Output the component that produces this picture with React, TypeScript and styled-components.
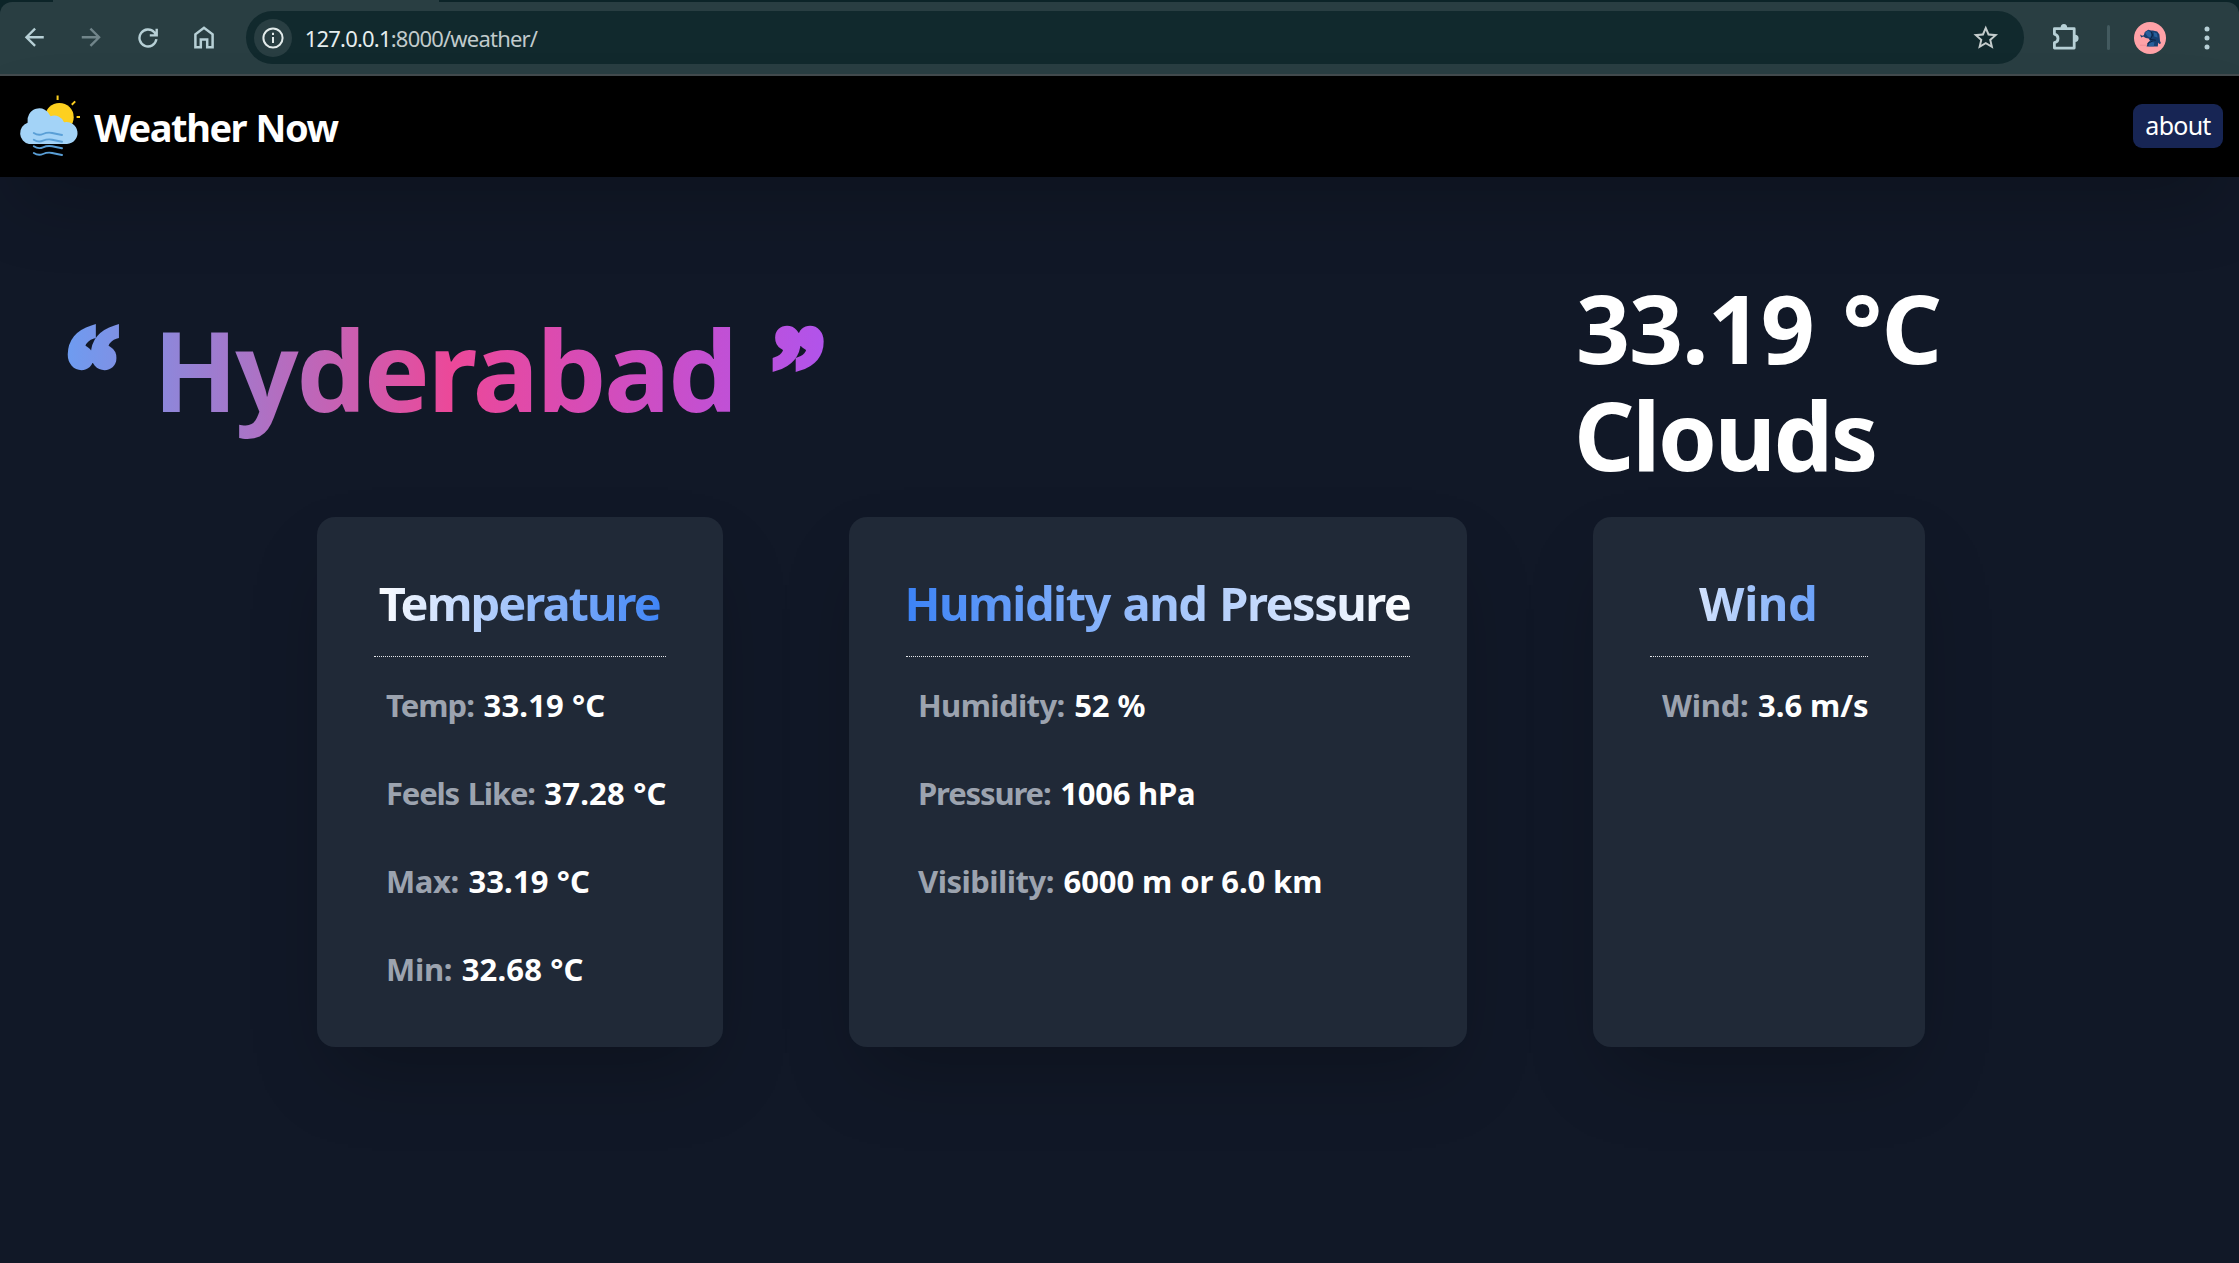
import React from "react";
import styled, { createGlobalStyle } from "styled-components";

const GlobalStyle = createGlobalStyle`
  * { box-sizing: border-box; }
  html, body { margin: 0; padding: 0; background: #111827; }
  body {
    font-family: "Noto Sans", "Open Sans", sans-serif;
    color: #fff;
    overflow: hidden;
  }
  h1, h2, p { margin: 0; }
`;

const Window = styled.div`
  width: 2239px;
  height: 1263px;
  display: flex;
  flex-direction: column;
  background: #111827;
`;

/* Browser chrome */

const BrowserFrame = styled.div`
  flex: none;
  background: #0c2428;
`;

const TabStrip = styled.div`
  height: 2px;
  padding-left: 53px;
`;

const ActiveTab = styled.div`
  width: 386px;
  height: 2px;
  background: #293e42;
`;

const Toolbar = styled.div`
  height: 74px;
  display: flex;
  align-items: center;
  padding: 0 0 1px 6px;
  background: #293e42;
  border-bottom: 2px solid #434b4e;
  border-radius: 12px 12px 0 0;
`;

const ToolButton = styled.span<{ $dim?: boolean; $width?: number }>`
  flex: none;
  width: ${(p) => p.$width ?? 56.7}px;
  display: flex;
  justify-content: center;
  color: ${(p) => (p.$dim ? "#71858a" : "#b7d0d6")};

  svg { display: block; }
`;

const AddressBar = styled.div`
  flex: none;
  width: 1778px;
  height: 53px;
  margin-left: 13px;
  padding: 0 23px 0 8px;
  display: flex;
  align-items: center;
  border-radius: 27px;
  background: #11292d;
`;

const SiteInfo = styled.span`
  width: 38px;
  height: 38px;
  display: flex;
  align-items: center;
  justify-content: center;
  border-radius: 50%;
  background: #293e42;
`;

const Url = styled.span`
  flex: 1;
  margin-left: 13px;
  font-size: 22px;
  line-height: 30px;
  letter-spacing: -0.8px;
  color: #c1cbcc;
`;

const Host = styled.span`
  color: #e6eeee;
`;

const Divider = styled.span`
  flex: none;
  width: 3px;
  height: 25px;
  margin: 0 24.5px 0 0;
  border-radius: 2px;
  background: #435a5f;
`;

const Avatar = styled.span`
  flex: none;
  width: 32px;
  height: 32px;
  border-radius: 50%;
  overflow: hidden;
  background: #ffa1a7;

  svg { display: block; }
`;

/* Site header */

const NavBar = styled.header`
  flex: none;
  height: 101px;
  display: flex;
  align-items: center;
  justify-content: space-between;
  padding: 0 16px 1px 14px;
  background: #000;
  box-shadow: 0 37px 75px -18px rgba(0, 0, 0, 0.25);
`;

const Brand = styled.div`
  display: flex;
  align-items: center;
  gap: 14px;
`;

const BrandName = styled.span`
  padding-top: 2px;
  font-size: 38px;
  font-weight: 700;
  line-height: 50px;
  letter-spacing: -1.45px;
  word-spacing: 1px;
`;

const AboutLink = styled.a`
  width: 90px;
  height: 44px;
  border-radius: 9px;
  background: #172554;
  font-size: 25px;
  line-height: 43px;
  letter-spacing: -0.74px;
  text-align: center;
`;

/* Hero */

const Hero = styled.section`
  flex: none;
  height: 340px;
  display: flex;
  align-items: flex-start;
  padding: 97px 0 0 24px;
`;

const City = styled.h1`
  width: 1552px;
  display: flex;
  align-items: flex-start;
  padding: 35px 0 0 42.6px;
  font-size: 111px;
  line-height: 120px;
`;

/* $offset is how far the part starts from the left end of the shared sweep */
const Swept = styled.span<{ $offset: number }>`
  background-image: linear-gradient(
    to right,
    #60a5fa ${(p) => -p.$offset}px,
    #ec4899 ${(p) => 428 - p.$offset}px,
    #a855f7 ${(p) => 856 - p.$offset}px
  );
  -webkit-background-clip: text;
  background-clip: text;
  color: transparent;
`;

const CityName = styled(Swept)`
  width: 590px;
  height: 150px;
  margin-left: 28.4px;
  letter-spacing: -2.53px;
`;

const Quote = styled(Swept)`
  width: 58px;
  margin-top: 6px;
  font-family: "Liberation Serif", serif;
  font-size: 102px;
  font-weight: 700;
  line-height: 110px;
  -webkit-text-stroke: 7px transparent;
  transform: scale(1.03, 1.18);
`;

const ClosingQuote = styled(Quote)`
  margin-left: 30px;
`;

const Summary = styled.div`
  font-size: 94.5px;
  font-weight: 700;
  line-height: 107px;
`;

const SummaryLine = styled.p<{ $tracking: number; $shift?: number }>`
  margin-left: ${(p) => p.$shift ?? 0}px;
  letter-spacing: ${(p) => p.$tracking}px;
  word-spacing: 5px;
  white-space: nowrap;
`;

/* Cards */

const Cards = styled.section`
  display: flex;
  gap: 126px;
  padding-left: 317px;
`;

const CardBox = styled.article<{ $width: number }>`
  width: ${(p) => p.$width}px;
  height: 530px;
  padding: 58px 57px 0 56.5px;
  border-radius: 18px;
  background: #202937;
  box-shadow: 0 37px 75px -18px rgba(0, 0, 0, 0.25);
`;

const CardTitle = styled.h2<{ $reverse?: boolean; $tracking: number }>`
  height: 67px;
  margin-left: -1px;
  font-size: 47px;
  line-height: 56px;
  text-align: center;
  white-space: nowrap;
  letter-spacing: ${(p) => p.$tracking}px;
  word-spacing: 2px;
  background-image: linear-gradient(
    to ${(p) => (p.$reverse ? "left" : "right")},
    #ffffff,
    #3b82f6
  );
  -webkit-background-clip: text;
  background-clip: text;
  color: transparent;
`;

const Rule = styled.div`
  height: 1px;
  margin: 14px 0 3.5px;
  border-top: 1px dotted #e5e7eb;
`;

const Row = styled.p`
  display: flex;
  gap: 9.6px;
  padding-left: 12.5px;
  font-size: 31px;
  font-weight: 700;
  line-height: 88px;
  white-space: nowrap;
`;

const Label = styled.span<{ $tracking: number }>`
  color: #9ca3af;
  letter-spacing: ${(p) => p.$tracking}px;
  word-spacing: 2px;
`;

const Value = styled.span<{ $tracking: number }>`
  letter-spacing: ${(p) => p.$tracking}px;
`;

type Reading = { label: string; lt: number; value: string; vt: number };
type Panel = { title: string; tracking: number; width: number; reverse?: boolean; rows: Reading[] };

const panels: Panel[] = [
  {
    title: "Temperature",
    tracking: -1.97,
    width: 406,
    rows: [
      { label: "Temp:", lt: -0.95, value: "33.19 °C", vt: 0.12 },
      { label: "Feels Like:", lt: -1.2, value: "37.28 °C", vt: 0.2 },
      { label: "Max:", lt: -0.41, value: "33.19 °C", vt: 0.12 },
      { label: "Min:", lt: -0.3, value: "32.68 °C", vt: 0.12 },
    ],
  },
  {
    title: "Humidity and Pressure",
    tracking: -1.5,
    width: 618,
    reverse: true,
    rows: [
      { label: "Humidity:", lt: -0.61, value: "52 %", vt: -0.1 },
      { label: "Pressure:", lt: -1.13, value: "1006 hPa", vt: -0.22 },
      { label: "Visibility:", lt: -0.5, value: "6000 m or 6.0 km", vt: -0.09 },
    ],
  },
  {
    title: "Wind",
    tracking: -0.35,
    width: 332,
    rows: [{ label: "Wind:", lt: -0.25, value: "3.6 m/s", vt: -0.05 }],
  },
];

const BackIcon = () => (
  <svg width="28.5" height="28.5" viewBox="0 0 24 24" fill="currentColor">
    <path d="M20 11H7.83l5.59-5.59L12 4l-8 8 8 8 1.41-1.41L7.83 13H20v-2z" />
  </svg>
);

const ForwardIcon = () => (
  <svg width="28.5" height="28.5" viewBox="0 0 24 24" fill="currentColor">
    <path d="M12 4l-1.41 1.41L16.17 11H4v2h12.17l-5.58 5.59L12 20l8-8z" />
  </svg>
);

const ReloadIcon = () => (
  <svg width="20" height="20" viewBox="0 0 20 20" fill="none" stroke="currentColor" strokeWidth="2.4">
    <path d="M18.4 11.2A8.5 8.5 0 1 1 16.3 4.3L18.2 6.8M18.7 .8V7.4H11.8" />
  </svg>
);

const HomeIcon = () => (
  <svg width="20" height="23" viewBox="0 0 20 23" fill="none" stroke="currentColor" strokeWidth="2.5">
    <path d="M1.4 21.2V8.3L10 1.8l8.6 6.5v12.9h-5.4v-7.7H6.8v7.7z" />
  </svg>
);

const InfoIcon = () => (
  <svg width="22" height="22" viewBox="0 0 22 22" fill="none" stroke="#e3ebeb" strokeWidth="2">
    <circle cx="11" cy="11" r="9.6" />
    <path d="M11 10v6M11 5.8v2.3" />
  </svg>
);

const StarIcon = () => (
  <svg width="29.5" height="29.5" viewBox="0 0 24 24" fill="#c4cccc">
    <path d="M22 9.24l-7.19-.62L12 2 9.19 8.63 2 9.24l5.46 4.73L5.82 21 12 17.27 18.18 21l-1.63-7.03L22 9.24zM12 15.4l-3.76 2.27 1-4.28-3.32-2.88 4.38-.38L12 6.1l1.71 4.04 4.38.38-3.32 2.88 1 4.28L12 15.4z" />
  </svg>
);

const ExtensionIcon = () => (
  <svg width="27" height="29" viewBox="0 -.5 27 29">
    <path
      d="M2.4 5.2H22.2V24.6H2.4V19.2C7.2 18 7.2 11.8 2.4 10.6Z"
      fill="none" stroke="currentColor" strokeWidth="2.8" strokeLinejoin="round"
    />
    <path d="M8.6 4.4a3.3 3.8 0 0 1 6.6 0zM23 11.2a3.6 3.6 0 0 1 0 7.2z" fill="currentColor" />
  </svg>
);

const MenuIcon = () => (
  <svg width="6" height="24" viewBox="0 0 6 24" fill="currentColor">
    <circle cx="3" cy="3" r="2.5" />
    <circle cx="3" cy="12" r="2.5" />
    <circle cx="3" cy="21" r="2.5" />
  </svg>
);

const ElephantIcon = () => (
  <svg width="32" height="32" viewBox="0 0 32 32">
    <path
      d="M6 12.4l2.2 1.4 1.6-.6 1-3.2 3.4-2.2 3 .6 1.6.2 4.4 1 2.2 3 .6 6.4 1 2.2-1.8.8-1-1.6-.4 4H12.6l1-3.4 2.4-2.4-1.4-2.2-2.8-.4-2.6-1.4-2 1z"
      fill="#173f70"
    />
    <path d="M11 10.5l3-2 3.6 2.4-1.2 4.8-3-1.4zM19.6 10l3.4 1.6.6 4-3.4-1zM15.4 19.4l5 1-.6 3.8h-5.2z" fill="#285f9b" />
    <path d="M17 9.6l1.6 3.6-2.4 4.2 5.6.8M13.6 21.5l5-2.4" fill="none" stroke="#0c1f3c" strokeWidth=".9" />
    <path d="M6 23.2h7" stroke="#e98790" strokeWidth=".7" />
  </svg>
);

const WeatherLogo = () => (
  <svg width="66" height="64" viewBox="15 95 66 64">
    <g stroke="#fdd01f" strokeWidth="2">
      <path d="M58.6 96.6v4.4M72.8 105.8l3.4-3.4M77.6 118h3.4" />
    </g>
    <circle cx="60.4" cy="118.2" r="14.3" fill="#fdd01f" />
    <path
      d="M30 145a11 11 0 0 1 -1.4-21.2A12 12 0 0 1 51.6 117.2A10.3 10.3 0 0 1 65 123.3A11 11 0 1 1 68 145z"
      fill="#a3d3f7"
    />
    <g fill="none" stroke="#5a9fd6" strokeWidth="1.9" strokeLinecap="round">
      <path d="M34.8 134q4.6 3 9.2 1t9.2-1t9.8 2" />
      <path d="M34.8 140.7q4.6 3 9.2 1t9.2-1t9.8 2" />
      <path d="M34.8 147.3q4.6 3 9.2 1t9.2-1t9.8 2" />
      <path d="M34.8 154q4.6 3 9.2 1t9.2-1t9.8 2" />
    </g>
  </svg>
);

const WeatherCard = ({ panel }: { panel: Panel }) => (
  <CardBox $width={panel.width}>
    <CardTitle $reverse={panel.reverse} $tracking={panel.tracking}>{panel.title}</CardTitle>
    <Rule />
    {panel.rows.map((row) => (
      <Row key={row.label}>
        <Label $tracking={row.lt}>{row.label}</Label>
        <Value $tracking={row.vt}>{row.value}</Value>
      </Row>
    ))}
  </CardBox>
);

export default function App() {
  return (
    <Window>
      <GlobalStyle />
      <BrowserFrame>
        <TabStrip>
          <ActiveTab />
        </TabStrip>
        <Toolbar>
          <ToolButton><BackIcon /></ToolButton>
          <ToolButton $dim><ForwardIcon /></ToolButton>
          <ToolButton><ReloadIcon /></ToolButton>
          <ToolButton><HomeIcon /></ToolButton>
          <AddressBar>
            <SiteInfo><InfoIcon /></SiteInfo>
            <Url><Host>127.0.0.1</Host>:8000/weather/</Url>
            <StarIcon />
          </AddressBar>
          <ToolButton $width={83}><ExtensionIcon /></ToolButton>
          <Divider />
          <Avatar><ElephantIcon /></Avatar>
          <ToolButton $width={81.4}><MenuIcon /></ToolButton>
        </Toolbar>
      </BrowserFrame>

      <NavBar>
        <Brand>
          <WeatherLogo />
          <BrandName>Weather Now</BrandName>
        </Brand>
        <AboutLink>about</AboutLink>
      </NavBar>

      <Hero>
        <City>
          <Quote $offset={42}>“</Quote>
          <CityName $offset={129}>Hyderabad</CityName>
          <ClosingQuote $offset={749}>”</ClosingQuote>
        </City>
        <Summary>
          <SummaryLine $tracking={-1}>33.19 °C</SummaryLine>
          <SummaryLine $tracking={-2.45} $shift={-2}>Clouds</SummaryLine>
        </Summary>
      </Hero>

      <Cards>
        {panels.map((panel) => (
          <WeatherCard key={panel.title} panel={panel} />
        ))}
      </Cards>
    </Window>
  );
}
